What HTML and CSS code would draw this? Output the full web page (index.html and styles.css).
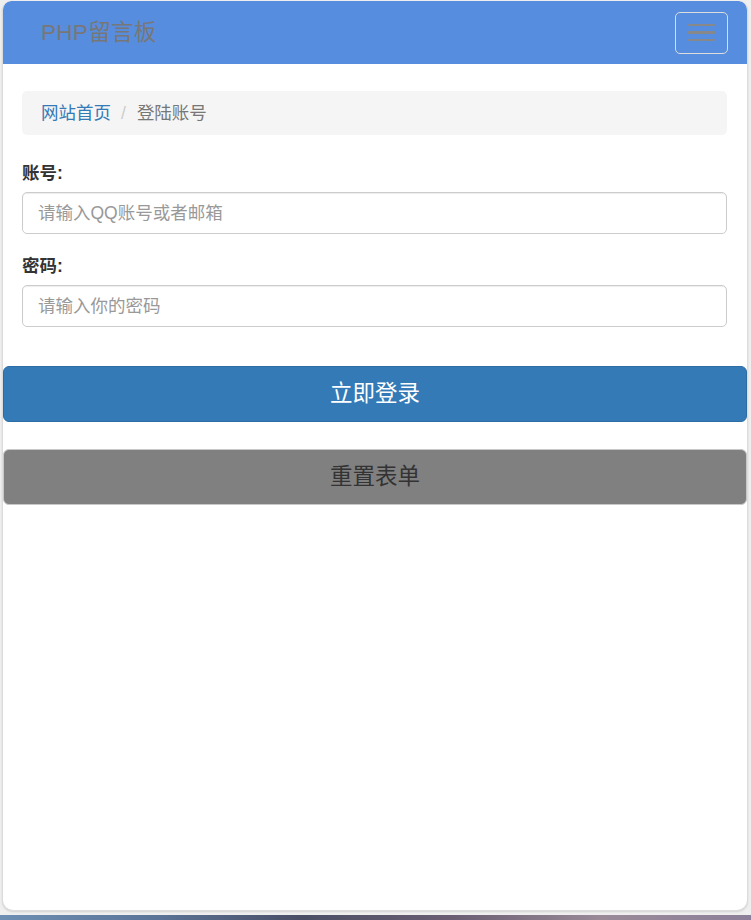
FILE: index.html
```html
<!DOCTYPE html>
<html lang="zh-CN">
<head>
<meta charset="utf-8">
<title>PHP留言板 - 登陆账号</title>
<link rel="stylesheet" href="styles.css">
</head>
<body>
<div class="window">
  <nav class="navbar">
    <a class="brand" href="#">PHP留言板</a>
    <button class="toggle" type="button" aria-label="菜单">
      <span class="bar"></span>
      <span class="bar"></span>
      <span class="bar"></span>
    </button>
  </nav>
  <div class="container">
    <ol class="breadcrumb">
      <li><a href="#">网站首页</a></li>
      <li class="sep">/</li>
      <li class="active">登陆账号</li>
    </ol>
    <div class="form-group">
      <label for="user">账号:</label>
      <input id="user" class="form-control" type="text" placeholder="请输入QQ账号或者邮箱">
    </div>
    <div class="form-group">
      <label for="pass">密码:</label>
      <input id="pass" class="form-control" type="password" placeholder="请输入你的密码">
    </div>
  </div>
  <div class="actions">
    <button class="btn btn-primary" type="submit">立即登录</button>
    <button class="btn btn-reset" type="reset">重置表单</button>
  </div>
</div>
<div class="taskbar"></div>
</body>
</html>
```
FILE: styles.css
```css
* { box-sizing: border-box; }
html, body { margin: 0; padding: 0; }
body {
  width: 751px;
  height: 920px;
  background: #efefef;
  font-family: "Liberation Sans", "Noto Sans CJK SC", sans-serif;
  font-size: 17.5px;
  line-height: 1.42857;
  color: #333;
  display: flex;
  flex-direction: column;
  overflow: hidden;
}
.window {
  margin: 1px 3px 0 2px;
  height: 910px;
  background: #fff;
  border: 1px solid #dcdcdc;
  border-top: none;
  border-radius: 9px 9px 11px 11px;
  box-shadow: 0 1px 2px rgba(0,0,0,0.12);
  overflow: hidden;
}
.navbar {
  height: 63px;
  background: #578ddf;
  display: flex;
  align-items: center;
  justify-content: space-between;
  padding: 0 19px 0 38px;
  border-radius: 8px 8px 0 0;
}
.brand {
  font-size: 22.5px;
  letter-spacing: 0.3px;
  color: #777;
  text-decoration: none;
  line-height: 30px;
  margin-top: 1px;
}
.toggle {
  width: 53px;
  height: 42px;
  background: transparent;
  border: 1px solid #ddd;
  border-radius: 5px;
  display: flex;
  flex-direction: column;
  align-items: center;
  justify-content: center;
  gap: 5px;
  padding: 0;
  margin-top: 0;
}
.bar {
  display: block;
  width: 27px;
  height: 2.5px;
  background: #888;
  border-radius: 1px;
}
.container {
  padding: 27px 20px 0 19px;
}
.breadcrumb {
  list-style: none;
  margin: 0 0 25px 0;
  padding: 10px 19px;
  height: 44px;
  background: #f5f5f5;
  border-radius: 5px;
  display: flex;
  align-items: center;
  gap: 8px;
  line-height: 24px;
}
.breadcrumb a { color: #337ab7; text-decoration: none; }
.breadcrumb .sep { color: #ccc; padding: 0 3px 0 2px; }
.breadcrumb .active { color: #777; }
.form-group {
  display: flex;
  flex-direction: column;
  margin-bottom: 19px;
}
.form-group label {
  font-weight: bold;
  line-height: 24px;
  margin-bottom: 7px;
  margin-top: 1px;
}
.form-control {
  height: 42px;
  width: 100%;
  padding: 7px 15px;
  font-family: inherit;
  font-size: 17.5px;
  color: #555;
  background: #fff;
  border: 1px solid #ccc;
  border-radius: 5px;
  box-shadow: inset 0 1px 1px rgba(0,0,0,0.075);
  outline: none;
}
.form-control::placeholder { color: #999; }
.actions {
  display: flex;
  flex-direction: column;
  gap: 27px;
  padding: 20px 0 0 0;
}
.btn {
  display: block;
  width: 100%;
  height: 56px;
  font-family: inherit;
  font-size: 22.5px;
  line-height: 30px;
  border-radius: 6px;
  cursor: pointer;
}
.btn-primary {
  background: #337ab7;
  border: 1px solid #2e6da4;
  color: #fff;
}
.btn-reset {
  background: #808080;
  border: 1px solid #c8c8c8;
  color: #333;
}
.taskbar {
  margin-top: 4px;
  height: 5px;
  background: linear-gradient(90deg, #6d8fb3 0%, #5b7599 20%, #4a4f66 40%, #6a5d72 60%, #9a8a98 80%, #8c7f99 100%);
}
```
